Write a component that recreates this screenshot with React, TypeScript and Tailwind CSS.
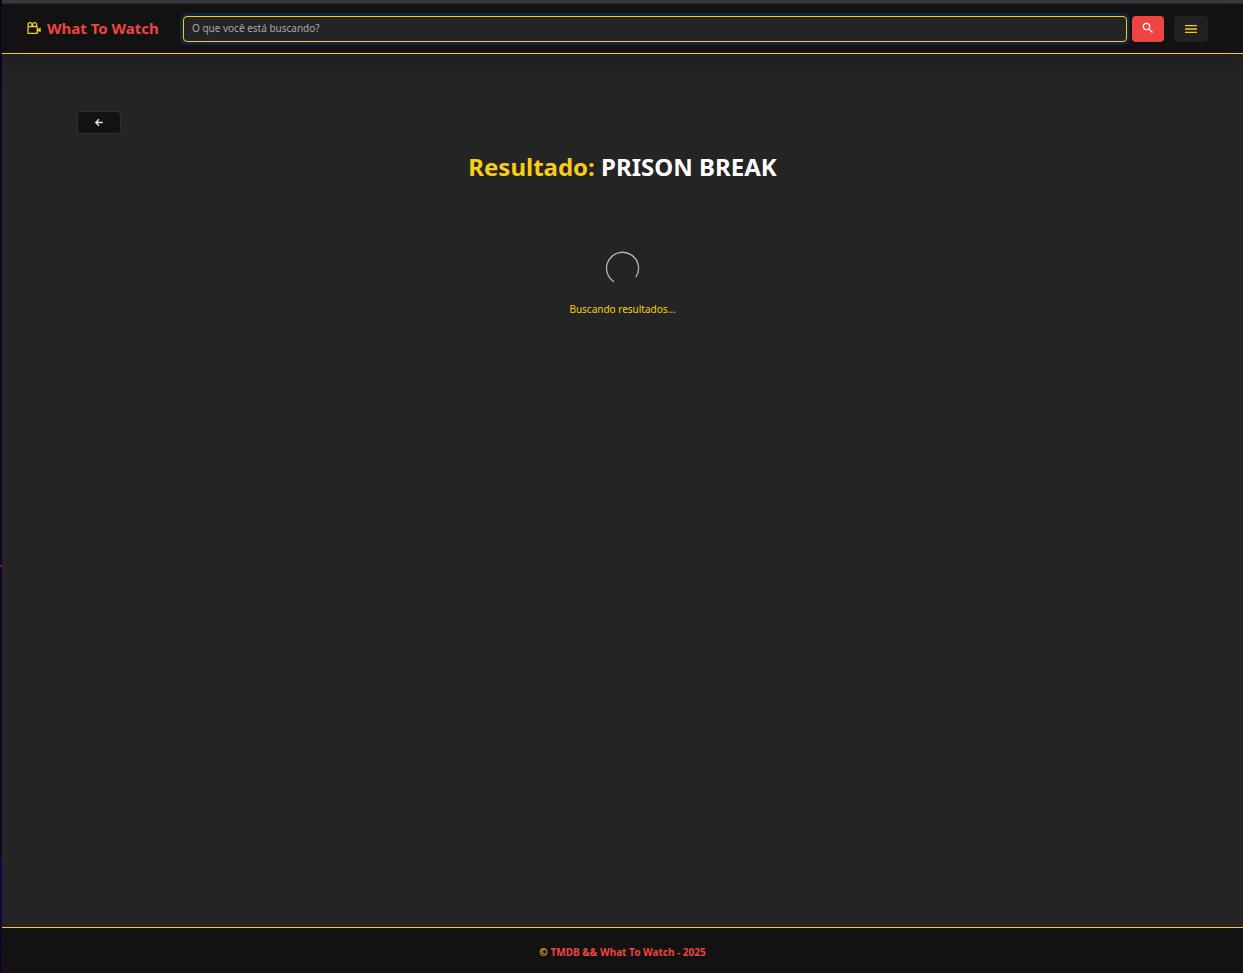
import { BiCameraMovie } from "react-icons/bi";
import { MdMenu, MdSearch } from "react-icons/md";

function Header() {
  return (
    <header className="relative flex h-[50px] items-center border-b border-[#facc15] bg-[#121212] pr-[35px] pl-6 shadow-[0_8px_24px_rgba(0,0,0,0.2)]">
      <a href="#" className="flex w-[157px] shrink-0 items-center gap-[5px] pb-px whitespace-nowrap text-[15px] leading-6 font-bold text-[#ef4444]">
        <BiCameraMovie className="size-4 shrink-0 text-[#facc15]" />
        <span>What To Watch</span>
      </a>
      <form className="flex min-w-0 flex-1 items-center" onSubmit={(e) => e.preventDefault()}>
        <input
          type="search"
          aria-label="O que você está buscando?"
          placeholder="O que você está buscando?"
          className="h-[26px] min-w-0 flex-1 rounded-[4px] border border-[#facc15] bg-[#242424] px-2 pb-[2px] text-[10px] text-white shadow-[0_0_0_3px_#11243f] outline-none placeholder:text-[#a8a8a8]"
        />
        <button type="submit" aria-label="Buscar" className="ml-[5px] flex h-[26px] w-8 items-center justify-center rounded-[4px] bg-[#ef4444] pb-px text-white">
          <MdSearch className="size-[14px]" />
        </button>
      </form>
      <button type="button" aria-label="Menu" className="ml-[10px] flex h-[26px] w-[34px] items-center justify-center rounded-[4px] bg-[#212121] text-[#facc15]">
        <MdMenu className="size-4" />
      </button>
    </header>
  );
}

function BackArrow() {
  return (
    <svg viewBox="0 0 10 10" className="size-[10px]" fill="none" stroke="currentColor" strokeWidth="1.4" aria-hidden="true">
      <path d="M8.8 4.5H2M5 1.3 1.8 4.5 5 7.7" />
    </svg>
  );
}

function Spinner() {
  return (
    <svg viewBox="0 0 34 34" className="size-[34px]" fill="none" stroke="#b5b5b5" strokeWidth="1.3" aria-hidden="true">
      <path d="M8 30.8A16 16 0 1 1 29.8 26.2" />
    </svg>
  );
}

export default function App() {
  return (
    <div className="flex min-h-screen bg-[#242424] font-['Noto_Sans',sans-serif]">
      <div className="flex w-[2px] shrink-0 flex-col bg-[#070a1d]">
        <div className="h-[565px]" />
        <div className="h-[2px] bg-[#a5005f]" />
        <div className="h-[291px]" />
        <div className="flex-1 border-t border-[#24204a] bg-linear-to-b from-[#12064a] to-[#11021f]" />
      </div>
      <div className="flex min-w-0 flex-1 flex-col">
        <div className="h-1 shrink-0 border-b border-[#29282c] bg-[#3b3a40]" />
        <Header />
        <main className="flex flex-1 flex-col px-[75px] pt-[57px]">
          <button type="button" aria-label="Voltar" className="flex h-[23px] w-11 items-center justify-center rounded-[4px] border border-[#303030] bg-[#121212] text-[#e5e7eb]">
            <BackArrow />
          </button>
          <h1 className="mt-[17px] text-center text-[24px] leading-8 font-bold text-white">
            <span className="text-[#facc15]">Resultado:</span> PRISON BREAK
          </h1>
          <div role="status" className="mt-[68px] flex flex-col items-center gap-4">
            <Spinner />
            <p className="text-[10px] leading-4 text-[#facc15]">Buscando resultados...</p>
          </div>
        </main>
        <footer className="flex h-[46px] items-center justify-center gap-[3px] border-t border-[#facc15] bg-[#121212] pt-1 text-[10px] font-bold text-[#ef4444]">
          <span className="text-[#facc15]">©</span>
          <span>TMDB &amp;&amp; What To Watch - 2025</span>
        </footer>
      </div>
    </div>
  );
}
